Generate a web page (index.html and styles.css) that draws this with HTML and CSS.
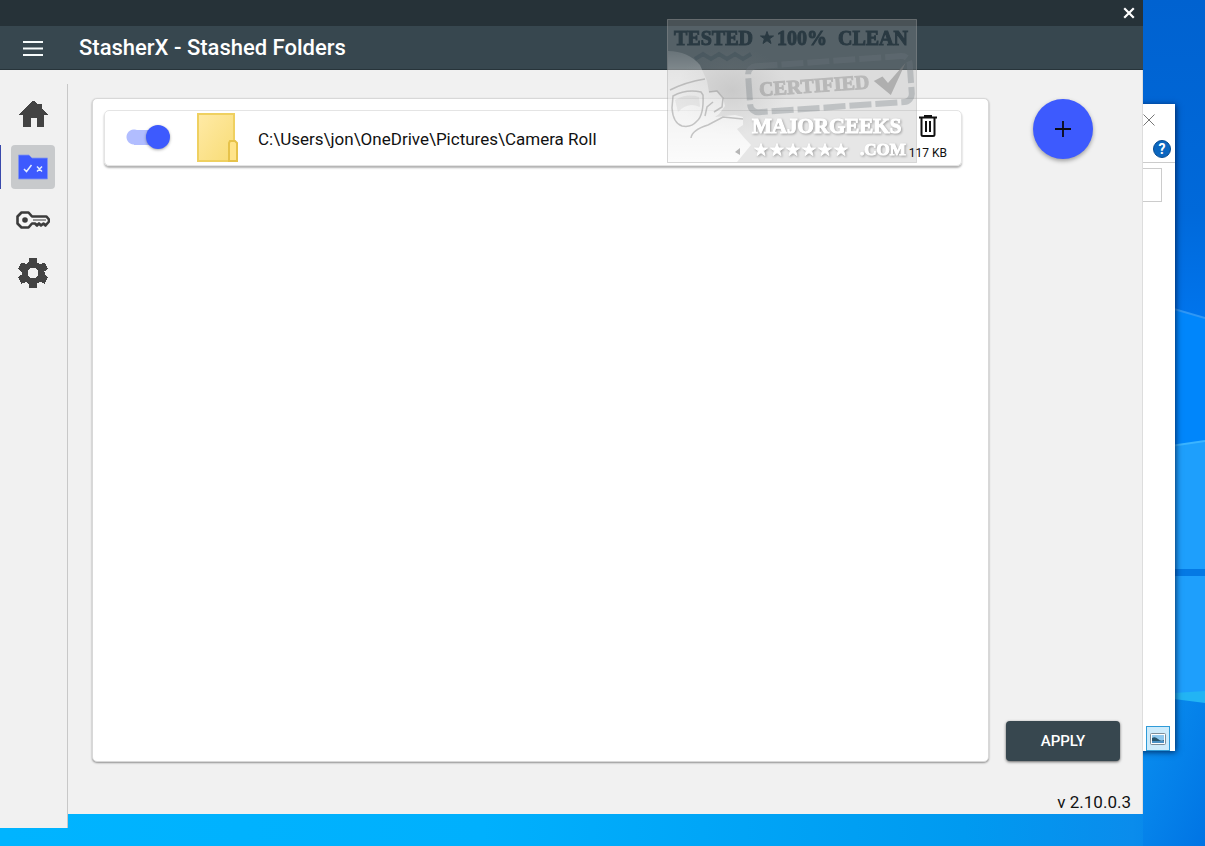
FILE: index.html
```html
<!DOCTYPE html>
<html lang="en">
<head>
<meta charset="utf-8">
<title>StasherX - Stashed Folders</title>
<link rel="stylesheet" href="styles.css">
</head>
<body>
<div class="desktop">
  <svg class="wallpaper" viewBox="0 0 62 846" preserveAspectRatio="none" aria-hidden="true">
    <defs>
      <linearGradient id="sky" x1="0" y1="0" x2="0" y2="1">
        <stop offset="0" stop-color="#0062d0"/><stop offset=".25" stop-color="#0069da"/><stop offset=".37" stop-color="#0074ec"/>
      </linearGradient>
      <linearGradient id="low" x1="0" y1="0" x2="1" y2="1">
        <stop offset="0" stop-color="#0a90f0"/><stop offset="1" stop-color="#0074e4"/>
      </linearGradient>
    </defs>
    <rect width="62" height="846" fill="url(#sky)"/>
    <path d="M0 300L62 318V446H0z" fill="#0086fb"/>
    <path d="M0 300L62 318" stroke="#2f97f5" stroke-width="2"/>
    <path d="M0 450L62 441V700H0z" fill="#1e9ffc"/>
    <path d="M0 450L62 441" stroke="#3bb4ff" stroke-width="2"/>
    <rect y="569" width="62" height="7" fill="#0479e4"/>
    <path d="M0 692L62 702V846H0z" fill="url(#low)"/>
    <path d="M0 695L62 691V703z" fill="#22b4f4"/>
  </svg>

  <section class="explorer" aria-label="Explorer window">
    <button class="explorer-close" aria-label="Close Explorer">
      <svg width="12" height="12" viewBox="0 0 12 12"><path d="M.5.5l11 11M11.5.5l-11 11" stroke="#777" fill="none"/></svg>
    </button>
    <button class="explorer-help" aria-label="Help">?</button>
    <div class="explorer-tools"><input class="explorer-search" type="text" aria-label="Search"></div>
    <button class="explorer-view" aria-label="Large icons">
      <svg width="16" height="12" viewBox="0 0 16 12"><rect x=".5" y=".5" width="15" height="11" rx="1" fill="#fff" stroke="#7c8d98"/><rect x="2" y="2" width="12" height="8" fill="#8ec8ee"/><path d="M2 5q3-2 6 1t6 1v3H2z" fill="#28566e"/><path d="M2 8h12v2H2z" fill="#4b91c4"/></svg>
    </button>
  </section>

  <div class="app">
    <header>
      <div class="titlebar">
        <button class="close" aria-label="Close"><svg width="12" height="12" viewBox="0 0 12 12"><path d="M2 2l8 8M10 2l-8 8" stroke="#fff" stroke-width="2.2" stroke-linecap="square"/></svg></button>
      </div>
      <div class="appbar">
        <button class="menu" aria-label="Menu"><svg width="20" height="16" viewBox="0 0 20 16"><path d="M0 2h20M0 8.500h20M0 15h20" stroke="#f6fbfb" stroke-width="2"/></svg></button>
        <h1>StasherX - Stashed Folders</h1>
      </div>
    </header>
    <div class="workspace">
      <nav class="rail">
        <a class="rail-item" href="#home" aria-label="Home"><svg width="30" height="26" viewBox="0 0 30 26" shape-rendering="crispEdges"><path d="M14 0h2l4 4V3h4v5l6 6h-4v12h-7v-9h-6v9H5V14H0l1-1z" fill="#434343"/></svg></a>
        <a class="rail-item active" href="#folders" aria-label="Stashed folders"><svg width="30" height="26" viewBox="0 0 30 26"><path d="M.5 1h10.500l3 3h15.500v21H.5z" fill="#3d5afe" stroke="#8195f0" stroke-width=".8"/><path d="M6 15l2.500 2.500L13.500 11M19 12.500l5 5M24 12.500l-5 5" fill="none" stroke="#e2ecff" stroke-width="1.500"/></svg></a>
        <a class="rail-item" href="#keys" aria-label="Keys"><svg width="34" height="18" viewBox="0 0 34 18"><path d="M16 5.500L12.500 1.500h-7L1.500 5.500v7l4 4h7L16 12.500h3l2 2 2-2 2 2 2.500-2 2 2 3.500-4v-2L30.500 5.500z" fill="#f6f6f6" stroke="#3c3c3c" stroke-width="2.600" stroke-linejoin="round"/><circle cx="9" cy="9" r="2.800" fill="#3c3c3c"/><path d="M17 9h13" stroke="#3c3c3c" stroke-width="1"/></svg></a>
        <a class="rail-item" href="#settings" aria-label="Settings"><svg width="30" height="30" viewBox="0 0 30 30" shape-rendering="crispEdges"><path fill="#434343" fill-rule="evenodd" d="M11.500 0h7l1 4.500 2.500 1.500 4.500-1.500 3.300 5.800L26.500 13.500v3l3.300 3.200-3.300 5.800L22 24l-2.500 1.500-1 4.500h-7l-1-4.500L8 24l-4.500 1.500L.2 19.700l3.300-3.200v-3L.2 10.300 3.500 4.500 8 6l2.500-1.500zM15 9.500a5.500 5.500 0 1 0 0 11 5.500 5.500 0 1 0 0-11z"/></svg></a>
      </nav>
      <main>
        <section class="panel">
          <ul>
            <li class="row">
              <input class="switch" type="checkbox" id="stash1" checked>
              <svg class="folder" width="42" height="50" viewBox="0 0 42 50" aria-hidden="true">
                <defs><linearGradient id="gold" x1="0" y1="0" x2="1" y2="1"><stop offset="0" stop-color="#ffeaa6"/><stop offset="1" stop-color="#f8dc76"/></linearGradient></defs>
                <path d="M2 1h36v47H2z" fill="url(#gold)" stroke="#efd060" stroke-width="2"/>
                <path d="M33 48V30l1-2h5l2 2v18z" fill="#ffe48a" stroke="#e6c24a" stroke-width="2"/>
              </svg>
              <label class="path" for="stash1">C:\Users\jon\OneDrive\Pictures\Camera Roll</label>
              <div class="tail">
                <button class="trash" aria-label="Remove folder"><svg width="20" height="22" viewBox="0 0 20 22"><path d="M1 2.500h18M6 1h8M3.500 2.500v17q0 1.500 1.500 1.500h10q1.500 0 1.500-1.500v-17M8 6v11M12 6v11" fill="none" stroke="#111" stroke-width="2"/></svg></button>
                <span class="size">117 KB</span>
              </div>
            </li>
          </ul>
        </section>
        <aside>
          <button class="fab" aria-label="Add folder"><svg width="16" height="16" viewBox="0 0 16 16"><path d="M8 0v16M0 8h16" stroke="#0a0a14" stroke-width="1.800"/></svg></button>
          <button class="apply">APPLY</button>
          <p class="version">v 2.10.0.3</p>
        </aside>
      </main>
    </div>
  </div>

  <svg class="stamp" width="250" height="145" viewBox="0 0 250 145" role="img" aria-label="Tested 100% clean, certified, MajorGeeks.com">
    <defs>
      <linearGradient id="face" x1="0" y1="0" x2="0" y2="1"><stop offset="0" stop-color="#fff" stop-opacity=".12"/><stop offset=".5" stop-color="#fff" stop-opacity=".5"/><stop offset="1" stop-color="#fff" stop-opacity=".85"/></linearGradient>
      <radialGradient id="glow"><stop offset="0" stop-color="#888" stop-opacity=".22"/><stop offset="1" stop-color="#888" stop-opacity="0"/></radialGradient>
      <path id="star" d="M0-6.500l1.600 4.500H6.500L2.600.8 4 5.500 0 2.700-4 5.500l1.400-4.700L-6.500-2h4.900z"/>
    </defs>
    <rect x=".5" y=".5" width="249" height="143" fill="#a5a5a5" fill-opacity=".28" stroke="#aaa" stroke-opacity=".4"/>
    <g class="stamp-tested">
      <text x="7" y="26">TESTED</text><use href="#star" transform="translate(100 19)"/><text x="110" y="26">100%</text><text x="171" y="26">CLEAN</text>
    </g>
    <ellipse cx="65" cy="72" rx="55" ry="45" fill="url(#glow)"/>
    <path d="M28 40l8-5 8 5 8-5 8 5 8-5 8 5 8-5" fill="none" stroke="#334650" stroke-opacity=".3" stroke-width="4"/>
    <path d="M1 32q20 0 32 14l7 16 2 11 8-1 6 6 2 9-6 8-4 3 20-2 8 2v8l-6 4q6 8 14 16l-14 17H1z" fill="url(#face)"/>
    <path d="M3 71q16-8 35-11M6 77q13-7 28-4l2 3q1 20-6 26-6 7-15 5-9-3-10-18zM42 73l8-1 6 7-1 9-8 5M38 97l2-9 6-5M24 119q1-8 17-13l15-8 20 2" fill="none" stroke="#888" stroke-opacity=".45" stroke-width="1.500"/>
    <path d="M8 81q12-7 24-3l1 10q-12-6-22 5z" fill="#888" fill-opacity=".12"/>
    <path d="M68 133l5-4v7z" fill="#888" fill-opacity=".6"/>
    <g transform="rotate(-4 165 66)">
      <rect x="82" y="42" width="162" height="46" rx="8" fill="none" stroke="#6c777c" stroke-opacity=".32" stroke-width="6" stroke-dasharray="22 4"/>
      <text class="stamp-certified" x="92" y="72">CERTIFIED</text>
      <path d="M207 65l9-4 5 7 19-19-17 31z" fill="#818181" fill-opacity=".5"/>
    </g>
    <g class="stamp-brand">
      <text x="85" y="114">MAJORGEEKS</text><text class="stamp-domain" x="193" y="136">.COM</text>
      <use href="#star" x="94" y="131"/><use href="#star" x="110" y="131"/><use href="#star" x="126" y="131"/><use href="#star" x="142" y="131"/><use href="#star" x="158" y="131"/><use href="#star" x="174" y="131"/>
    </g>
  </svg>
</div>
</body>
</html>
```
FILE: styles.css
```css
* { box-sizing: border-box; }
body { margin: 0; font-family: Roboto, "Liberation Sans", sans-serif; color: #111; }
button { border: 0; padding: 0; background: none; font: inherit; color: inherit; cursor: pointer; }
svg { display: block; }
h1, p, ul { margin: 0; padding: 0; }

.desktop {
  position: relative;
  display: flex;
  min-height: 100vh;
  padding: 0 62px 18px 0;
  overflow: hidden;
  background: linear-gradient(90deg, #00b4ff 0%, #00b0fd 40%, #009af0 80%, #0a8cec 94%, #007fe8 100%);
}
.wallpaper { position: absolute; top: 0; right: 0; width: 62px; height: 100%; }

.explorer {
  position: absolute;
  top: 104px;
  right: 30px;
  bottom: 95px;
  width: 60px;
  display: flex;
  flex-direction: column;
  align-items: flex-end;
  background: #fff;
  box-shadow: 1px 1px 6px rgba(0, 20, 60, .8);
}
.explorer-close { padding: 10px 20px 14px; }
.explorer-help {
  width: 18px;
  height: 18px;
  margin: 0 4px 4px;
  border: 1px solid #074b91;
  border-radius: 50%;
  background: #0b66bf;
  color: #fff;
  font-size: 14px;
  font-weight: 700;
  line-height: 16px;
}
.explorer-tools { width: 100%; padding: 5px 13px 0 0; border-top: 1px solid #ccc; }
.explorer-search { display: block; width: 100%; height: 34px; border: 1px solid #ccc; }
.explorer-view {
  display: grid;
  place-items: center;
  width: 24px;
  height: 25px;
  margin: auto 5px 0;
  border: 1px solid #2f9bd8;
  background: #cdebfb;
}

.app { position: relative; flex: 1; display: flex; flex-direction: column; }
.titlebar { display: flex; justify-content: flex-end; height: 26px; padding: 0 7px; background: #263238; }
.close { display: grid; place-items: center; width: 14px; }
.appbar {
  display: flex;
  align-items: center;
  height: 44px;
  background: #37474f;
  border-bottom: 1px solid #27343a;
  color: #fff;
}
.menu { margin: 0 36px 0 23px; }
h1 { font-size: 22px; font-weight: 500; line-height: 28px; }

.workspace { flex: 1; display: flex; }
.rail {
  display: flex;
  flex-direction: column;
  align-items: center;
  gap: 9px;
  width: 68px;
  padding: 22px 2px 0 0;
  background: linear-gradient(#c8c8c8, #c8c8c8) right 14px / 1px 100% no-repeat, #f1f1f1;
}
.rail-item {
  position: relative;
  display: grid;
  place-items: center;
  width: 44px;
  height: 44px;
  border-radius: 4px;
}
.rail-item.active { background: #c8cacc; }
.rail-item.active::before {
  content: "";
  position: absolute;
  top: 0;
  left: -11px;
  width: 1px;
  height: 44px;
  background: #3949ab;
}

main {
  flex: 1;
  display: flex;
  margin-bottom: 14px;
  padding: 28px 0 0 24px;
  background: #f1f1f1;
  border-right: 1px solid #ddd;
}
.panel {
  flex: 1;
  margin-bottom: 52px;
  padding: 11px 26px 11px 11px;
  border: 1px solid #d8d8d8;
  border-radius: 5px;
  background: #fff;
  box-shadow: 0 1px 2px rgba(0, 0, 0, .4);
}
.row {
  display: flex;
  align-items: center;
  height: 56px;
  padding: 0 14px 0 21px;
  border: 1px solid #e4e4e4;
  border-radius: 5px;
  box-shadow: 0 2px 2px rgba(0, 0, 0, .3);
}
.switch {
  appearance: none;
  display: flex;
  align-items: center;
  width: 44px;
  height: 24px;
  margin: 0 26px 2px 0;
  background: linear-gradient(#b1bdff, #b1bdff) 8px 5px / 24px 15px no-repeat, radial-gradient(circle at 8px 12px, #b1bdff 7px, transparent 8px);
  border-radius: 12px;
}
.switch::before {
  content: "";
  width: 24px;
  height: 24px;
  margin-left: auto;
  border-radius: 50%;
  background: #3d5afe;
  box-shadow: 0 1px 3px rgba(0, 0, 0, .35);
}
.folder { margin-right: 20px; }
.path { font-size: 17px; line-height: 24px; padding-top: 2px; }
.tail {
  position: relative;
  z-index: 2;
  display: flex;
  flex-direction: column;
  align-items: center;
  gap: 8px;
  margin-left: auto;
}
.size { font-size: 12px; line-height: 16px; }

aside { display: flex; flex-direction: column; align-items: center; width: 153px; }
.fab {
  display: grid;
  place-items: center;
  width: 60px;
  height: 60px;
  margin: 1px 5px 0 0;
  border-radius: 50%;
  background: #3d5afe;
  box-shadow: 0 2px 4px rgba(0, 0, 0, .35);
}
.apply {
  width: 114px;
  height: 40px;
  margin: auto 5px 0 0;
  border-radius: 4px;
  background: #37474f;
  color: #fff;
  font-size: 15px;
  font-weight: 500;
  box-shadow: 0 1px 3px rgba(0, 0, 0, .6);
}
.version { align-self: flex-end; margin: 29px 11px 0 0; font-size: 17px; line-height: 24px; }

.stamp { position: absolute; top: 19px; left: 667px; pointer-events: none; font-family: "Liberation Serif", serif; font-weight: 700; }
.stamp-tested { font-size: 20px; fill: #26363f; stroke: #26363f; stroke-width: 1px; opacity: .9; }
.stamp-certified { font-size: 20px; fill: #777; stroke: #777; stroke-width: 1px; opacity: .35; }
.stamp-brand { font-size: 21px; fill: #fff; stroke: #fff; stroke-width: 1px; filter: drop-shadow(1px 1px 1px rgba(0, 0, 0, .3)); }
.stamp-domain { font-size: 17px; }
```
